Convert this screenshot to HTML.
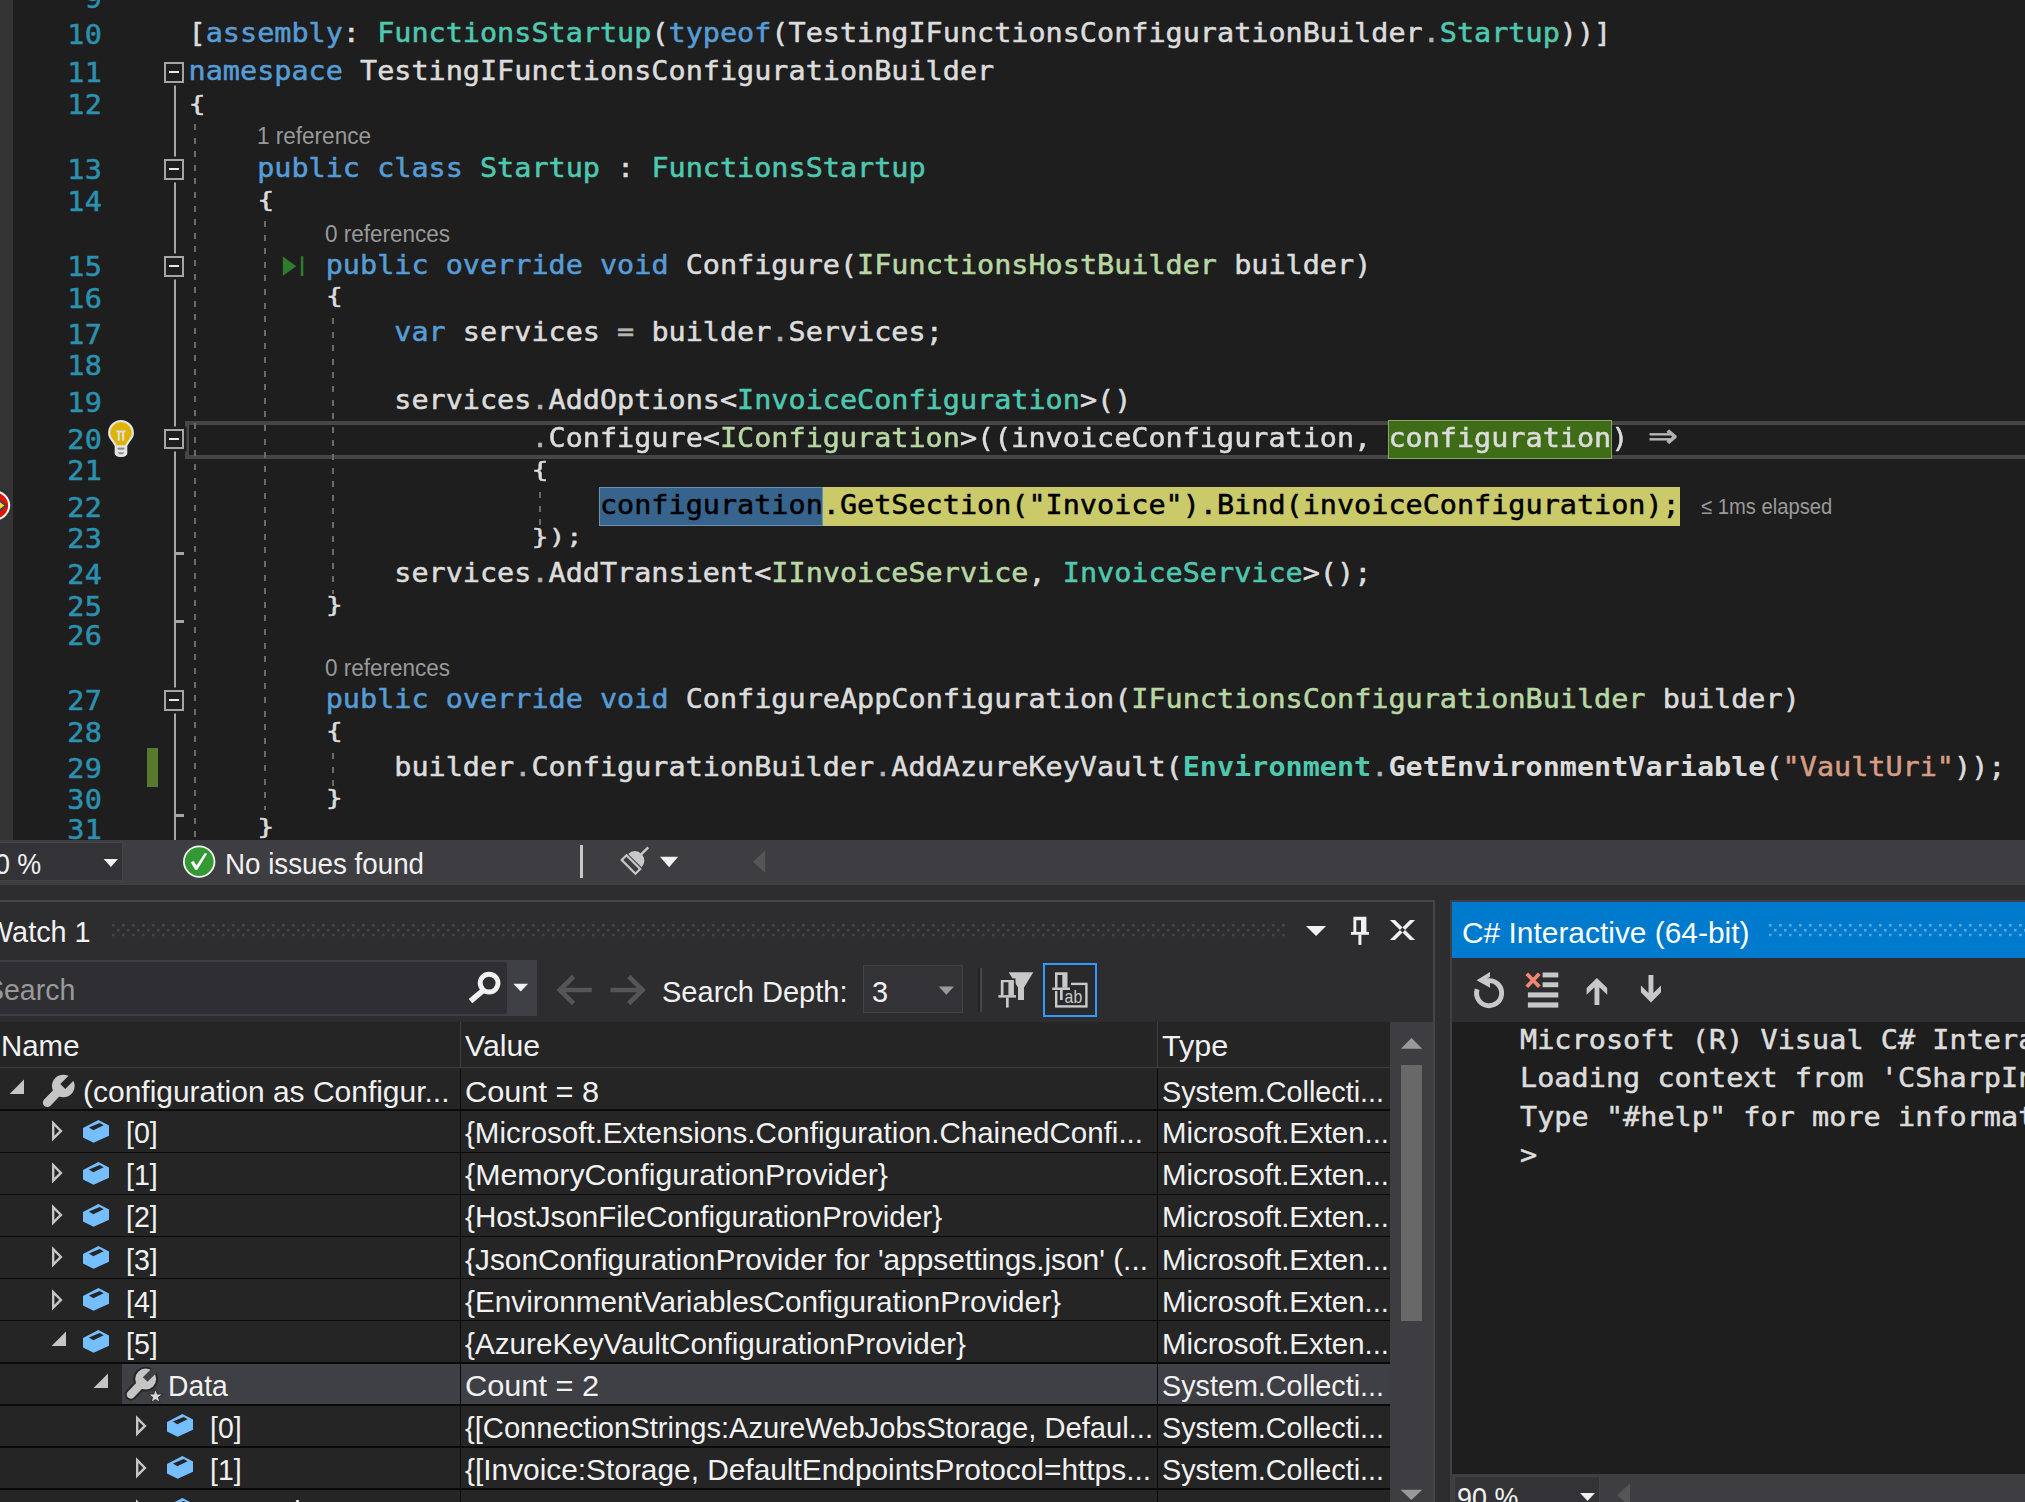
<!DOCTYPE html><html><head><meta charset="utf-8"><title>Visual Studio</title><style>
*{box-sizing:border-box}
html,body{margin:0;padding:0}
body{width:2025px;height:1502px;overflow:hidden;background:#1e1e1e;position:relative;font-family:"Liberation Sans",sans-serif;color:#f1f1f1}
div,span,svg{position:absolute}
.c span,.u span{position:static}
.c{left:188.6px;height:40px;line-height:40px;white-space:pre;font-family:"DejaVu Sans Mono","Liberation Mono",monospace;font-size:28.47px;color:#dcdcdc;transform:scaleY(.93);transform-origin:0 28.86px;-webkit-text-stroke:.55px}
.n{left:38.2px;width:64px;text-align:right;height:40px;line-height:40px;white-space:pre;font-family:"DejaVu Sans Mono","Liberation Mono",monospace;font-size:28.47px;color:#2b91af;transform:scaleY(.93);transform-origin:0 28.86px;-webkit-text-stroke:.55px;letter-spacing:.3px}
.k{color:#569cd6}.t{color:#4ec9b0}.i{color:#b8d7a3}.s{color:#d69d85}.o{color:#b4b4b4}.b{font-weight:bold;-webkit-text-stroke:0}.c .ar{display:inline-block;width:34.28px;text-align:center;transform:scale(1.7,1.55);transform-origin:50% 60%;color:#b4b4b4;position:relative;top:-2px}.d{color:#000}
.br{display:inline-block;position:static}
.u{white-space:pre;line-height:40px;height:40px;transform-origin:0 50%}
.cl{color:#999;font-size:20px}
.ob{width:20.4px;height:20.6px;left:164px;border:2px solid #a5a5a5;background:#1e1e1e;box-shadow:0 0 0 2.5px #1e1e1e}
.ob:after{content:"";position:absolute;left:3px;top:7px;width:10px;height:2px;background:#e8e8e8}
.g{width:2px;background:repeating-linear-gradient(to bottom,#6a6a6a 0,#6a6a6a 6px,transparent 6px,transparent 13.6px)}
.row{left:0;width:1390px;height:2px;background:#0c0c0c}
</style></head><body>
<div style="left:0;top:0;width:13px;height:840px;background:#333333"></div>
<div style="left:185px;top:420.5px;width:1850px;height:38px;border:4.5px solid #464646"></div>
<div style="left:1387.9px;top:420px;width:223.8px;height:38.5px;background:#3f6d17;border:1.5px solid #86a869"></div>
<div style="left:599.0px;top:487px;width:1080.8px;height:38.5px;background:#caca6b"></div>
<div style="left:599.0px;top:487px;width:223.8px;height:38.5px;background:#37648c;border:1.5px solid #6a90b3"></div>
<div class="g" style="left:193.8px;top:124.0px;height:716.0px"></div>
<div class="g" style="left:264.0px;top:221.0px;height:589.0px"></div>
<div class="g" style="left:331.6px;top:318.0px;height:276.0px"></div>
<div class="g" style="left:331.6px;top:753.0px;height:35.0px"></div>
<div class="g" style="left:538.8px;top:492.0px;height:35.0px"></div>
<div style="left:173.6px;top:83px;width:2.4px;height:757px;background:#a5a5a5"></div>
<div style="left:175px;top:552.4px;width:9px;height:2.4px;background:#a5a5a5"></div>
<div style="left:175px;top:620.4px;width:9px;height:2.4px;background:#a5a5a5"></div>
<div style="left:175px;top:814.2px;width:9px;height:2.4px;background:#a5a5a5"></div>
<div class="ob" style="top:62.3px"></div>
<div class="ob" style="top:159.3px"></div>
<div class="ob" style="top:256.3px"></div>
<div class="ob" style="top:428.8px"></div>
<div class="ob" style="top:690.0px"></div>
<div class="n" style="top:-20.86px">9</div>
<div class="n" style="top:14.64px">10</div>
<div class="n" style="top:53.44px">11</div>
<div class="n" style="top:85.34px">12</div>
<div class="n" style="top:149.84px">13</div>
<div class="n" style="top:181.84px">14</div>
<div class="n" style="top:247.14px">15</div>
<div class="n" style="top:278.74px">16</div>
<div class="n" style="top:315.04px">17</div>
<div class="n" style="top:346.04px">18</div>
<div class="n" style="top:382.54px">19</div>
<div class="n" style="top:419.84px">20</div>
<div class="n" style="top:451.44px">21</div>
<div class="n" style="top:487.74px">22</div>
<div class="n" style="top:519.14px">23</div>
<div class="n" style="top:555.14px">24</div>
<div class="n" style="top:586.64px">25</div>
<div class="n" style="top:616.04px">26</div>
<div class="n" style="top:680.94px">27</div>
<div class="n" style="top:712.84px">28</div>
<div class="n" style="top:748.84px">29</div>
<div class="n" style="top:779.74px">30</div>
<div class="n" style="top:809.74px">31</div>
<div class="c" style="top:13.34px">[<span class="k">assembly</span>: <span class="t">FunctionsStartup</span>(<span class="k">typeof</span>(TestingIFunctionsConfigurationBuilder<span class="o">.</span><span class="t">Startup</span>))]</div>
<div class="c" style="top:51.14px"><span class="k">namespace</span> TestingIFunctionsConfigurationBuilder</div>
<div class="c" style="top:81.61px;transform:scaleY(0.761)">{</div>
<div class="c" style="top:147.94px">    <span class="k">public</span> <span class="k">class</span> <span class="t">Startup</span> : <span class="t">FunctionsStartup</span></div>
<div class="c" style="top:178.48px;transform:scaleY(0.723)">    {</div>
<div class="c" style="top:245.14px">        <span class="k">public</span> <span class="k">override</span> <span class="k">void</span> Configure(<span class="i">IFunctionsHostBuilder</span> builder)</div>
<div class="c" style="top:274.21px;transform:scaleY(0.761)">        {</div>
<div class="c" style="top:312.14px">            <span class="k">var</span> services <span class="o">=</span> builder<span class="o">.</span>Services;</div>
<div class="c" style="top:379.94px">            services<span class="o">.</span>AddOptions&lt;<span class="t">InvoiceConfiguration</span>&gt;()</div>
<div class="c" style="top:417.64px">                    <span class="o">.</span>Configure&lt;<span class="i">IConfiguration</span>&gt;((invoiceConfiguration, configuration) <span class="ar">⇒</span></div>
<div class="c" style="top:448.24px;transform:scaleY(0.753)">                    {</div>
<div class="c" style="top:484.84px">                        <span class="d">configuration.GetSection("Invoice").Bind(invoiceConfiguration);</span></div>
<div class="c" style="top:514.53px;transform:scaleY(0.734)">                    });</div>
<div class="c" style="top:553.14px">            services<span class="o">.</span>AddTransient&lt;<span class="i">IInvoiceService</span>, <span class="t">InvoiceService</span>&gt;();</div>
<div class="c" style="top:582.66px;transform:scaleY(0.750)">        }</div>
<div class="c" style="top:678.94px">        <span class="k">public</span> <span class="k">override</span> <span class="k">void</span> ConfigureAppConfiguration(<span class="i">IFunctionsConfigurationBuilder</span> builder)</div>
<div class="c" style="top:709.31px;transform:scaleY(0.761)">        {</div>
<div class="c" style="top:746.84px">            builder<span class="o">.</span>ConfigurationBuilder<span class="o">.</span>AddAzureKeyVault(<span class="t b">Environment</span><span class="o">.</span><span class="b">GetEnvironmentVariable</span>(<span class="s">"VaultUri"</span>));</div>
<div class="c" style="top:776.21px;transform:scaleY(0.761)">        }</div>
<div class="c" style="top:805.21px;transform:scaleY(0.761)">    }</div>
<div class="u " id="t1" style="left:257.3px;top:116.1px;font-size:23px;transform:scaleX(0.9797);color:#999;">1 reference</div>
<div class="u " id="t2" style="left:324.8px;top:213.5px;font-size:23px;transform:scaleX(0.9784);color:#999;">0 references</div>
<div class="u " id="t3" style="left:324.8px;top:647.7px;font-size:23px;transform:scaleX(0.9784);color:#999;">0 references</div>
<div class="u " id="t4" style="left:1701.0px;top:487.3px;font-size:22px;transform:scaleX(0.9179);color:#999;">≤ 1ms elapsed</div>
<div style="left:147.3px;top:748.3px;width:11.2px;height:38.4px;background:#577a2f"></div>
<svg style="left:280px;top:254px" width="26" height="24" viewBox="280 254 26 24"><path d="M282.8 256.6L296.3 266.2L282.8 275.8Z" fill="#2e7d2e"/><rect x="300.8" y="256.2" width="2.5" height="19.8" fill="#2e7d2e"/></svg>
<svg style="left:107.5px;top:419.9px" width="26" height="37" viewBox="0 0 25.4 36.3">
<path d="M12.7 0A12.7 12.7 0 0 1 25.4 12.7C25.4 18 21 21 18.9 25.5V32.5C18.9 34.5 16.5 36.3 12.7 36.3C8.9 36.3 6.5 34.5 6.5 32.5V25.5C4.4 21 0 18 0 12.7A12.7 12.7 0 0 1 12.7 0Z" fill="#e4e4e4"/>
<path d="M12.7 2.2A10.5 10.5 0 0 1 23.2 12.7C23.2 17.2 18.6 20.5 16.9 24.8H8.5C6.8 20.5 2.2 17.2 2.2 12.7A10.5 10.5 0 0 1 12.7 2.2Z" fill="#dfb300"/>
<path d="M7.4 10.4H18L16.6 12.2H8.8Z" fill="#dcdcea"/><path d="M10.5 11.5V20.4M14.8 11.5V20.4" fill="none" stroke="#dcdcea" stroke-width="2"/>
<rect x="9.4" y="27.1" width="6.6" height="2" fill="#8c8c8c"/><path d="M9.6 31.6H15.8L14.4 33.6H11Z" fill="#8c8c8c"/></svg>
<svg style="left:0;top:488px" width="14" height="35" viewBox="0 488 14 35">
<circle cx="-4.75" cy="505.5" r="14.9" fill="#fff"/><circle cx="-4.75" cy="505.5" r="12.9" fill="#e51400"/>
<path d="M-6 494L7.3 505.5L-6 517Z" fill="#454545"/><path d="M-6 498L4.4 505.5L-6 513Z" fill="#ffd829"/></svg>
<div style="left:0;top:840px;width:2025px;height:45px;background:#3e3e42"></div>
<div style="left:0;top:885px;width:2025px;height:617px;background:#2d2d30"></div>
<div style="left:-2px;top:842px;width:125px;height:39px;background:#333337;border:1.5px solid #434346"></div>
<div class="u " id="t5" style="left:-19.6px;top:843.6px;font-size:30px;transform:scaleX(0.8960);">90 %</div>
<svg style="left:103px;top:858px" width="16" height="10"><path d="M0.7 1H15L7.85 9Z" fill="#f1f1f1"/></svg>
<svg style="left:183px;top:845px" width="33" height="34" viewBox="183 845 33 34"><circle cx="199.2" cy="861.6" r="16.2" fill="#f5f5f5"/><circle cx="199.2" cy="861.6" r="14.4" fill="#339933"/>
<path d="M190.7 862.3L193.6 861L196.6 865.5L204.6 853.2L207.2 853.4L197.2 869.9H195.4Z" fill="#fff"/></svg>
<div class="u " id="t6" style="left:225.3px;top:843.6px;font-size:30px;transform:scaleX(0.9250);">No issues found</div>
<div style="left:579.8px;top:845px;width:2.8px;height:32.5px;background:#c8c8c8"></div>
<svg style="left:618px;top:844px" width="34" height="34" viewBox="618 844 34 34"><g transform="translate(638 857.5) rotate(45)" fill="#c8c8c8">
<rect x="-1.2" y="-14.45" width="2.4" height="10"/><path d="M-9.5 4.4A9.5 9.5 0 0 1 9.5 4.4Z"/>
<rect x="-9.7" y="6.55" width="19.4" height="6.8" fill="none" stroke="#c8c8c8" stroke-width="2.2"/></g></svg>
<svg style="left:660px;top:856px" width="19" height="12"><path d="M0 0.7H18.2L9.1 11.2Z" fill="#f1f1f1"/></svg>
<svg style="left:752px;top:850px" width="14" height="24"><path d="M13.2 0.4V23.1L1 11.7Z" fill="#555558"/></svg>
<div style="left:-2px;top:900px;width:1437px;height:610px;border:2px solid #46464a;background:#2d2d30"></div>
<svg style="left:111.9px;top:924.2px" width="1174" height="13"><defs><pattern id="gp1" width="10" height="9.8" patternUnits="userSpaceOnUse"><rect width="2.6" height="2.6" fill="#46464a"/><rect x="5" y="4.9" width="2.6" height="2.6" fill="#46464a"/></pattern></defs><rect width="100%" height="12.5" fill="url(#gp1)"/></svg>
<div class="u " id="t7" style="left:-14.5px;top:911.9px;font-size:30px;transform:scaleX(0.9600);">Watch 1</div>
<svg style="left:1306px;top:925px" width="21" height="12"><path d="M0 1H20.1L10.05 11.1Z" fill="#f1f1f1"/></svg>
<svg style="left:1350px;top:916px" width="20" height="30" viewBox="1350 916 20 30" fill="#f1f1f1"><path d="M1353.4 916.8H1366.4V932H1353.4ZM1356.3 920.2V932H1361V920.2Z" fill-rule="evenodd"/><rect x="1350.9" y="931.9" width="18" height="2.9"/><rect x="1358.4" y="934.8" width="3" height="10.1"/></svg>
<svg style="left:1388px;top:918px" width="29" height="24" viewBox="1388 918 29 24"><path d="M1389.9 920H1395L1415.1 940.1H1410ZM1415.1 920H1410L1389.9 940.1H1395Z" fill="#f1f1f1"/></svg>
<div style="left:-2px;top:959.7px;width:539px;height:56px;border:2px solid #3f3f46;background:#2f2f33"></div>
<div style="left:506.9px;top:959.7px;width:30.1px;height:56px;background:#3f3f46"></div>
<div class="u " id="t8" style="left:-15.3px;top:970.0px;font-size:30px;transform:scaleX(0.9500);color:#999;">Search</div>
<svg style="left:466px;top:970px" width="36" height="36" viewBox="466 970 36 36"><circle cx="489.1" cy="983.1" r="8.9" fill="none" stroke="#f1f1f1" stroke-width="4.9"/><path d="M483.2 990.3L470.5 1001.2" stroke="#f1f1f1" stroke-width="5.6"/></svg>
<svg style="left:513px;top:983px" width="16" height="10"><path d="M0.3 0.8H15.1L7.7 8.5Z" fill="#f1f1f1"/></svg>
<svg style="left:555px;top:973px" width="40" height="34" viewBox="555 973 40 34"><path d="M573.5 976.5L559.8 990L573.5 1003.5M559.8 990H591.8" stroke="#555558" stroke-width="4.6" fill="none"/></svg>
<svg style="left:608px;top:973px" width="40" height="34" viewBox="608 973 40 34"><path d="M628.8 976.5L642.5 990L628.8 1003.5M642.5 990H610.5" stroke="#555558" stroke-width="4.6" fill="none"/></svg>
<div class="u " id="t9" style="left:662.3px;top:971.7px;font-size:30px;transform:scaleX(0.9672);">Search Depth:</div>
<div style="left:863px;top:965.2px;width:100px;height:48px;background:#333337;border:1.5px solid #434346"></div>
<div class="u " id="t10" style="left:872.1px;top:971.7px;font-size:30px;transform:scaleX(0.9648);">3</div>
<svg style="left:938px;top:986px" width="17" height="10"><path d="M0.7 0.5H16L8.35 8.8Z" fill="#999"/></svg>
<div style="left:978.3px;top:967.8px;width:2px;height:44.2px;background:#222224"></div><div style="left:980.3px;top:967.8px;width:1.8px;height:44.2px;background:#46464a"></div>
<svg style="left:997px;top:971px" width="38" height="38" viewBox="997 971 38 38" fill="#c8c8c8"><path d="M1008.7 972.3H1033.3L1024 987.5V1000H1018V987.5Z"/>
<rect x="999.3" y="978.4" width="16.2" height="17" fill="#2d2d30"/>
<path d="M1000.8 979.9H1013.9V995.3H1000.8ZM1003.5 982.3V995.3H1008.4V982.3Z" fill-rule="evenodd"/><rect x="998.4" y="995.1" width="17.6" height="2.5"/><rect x="1006" y="997.5" width="2.7" height="10.1"/></svg>
<div style="left:1043px;top:963px;width:54.1px;height:54.1px;border:2.2px solid #3399ff;background:#29292c"></div>
<svg style="left:1050px;top:970px" width="40" height="40" viewBox="1050 970 40 40" fill="#c8c8c8"><rect x="1056.2" y="983.9" width="30.2" height="22.5" fill="none" stroke="#c8c8c8" stroke-width="2.4"/>
<rect x="1051.3" y="971" width="19.7" height="20" fill="#29292c"/>
<path d="M1055 972.3H1067.5V987.7H1055ZM1057.5 975V987.7H1062.3V975Z" fill-rule="evenodd"/><rect x="1052.3" y="987.5" width="17.7" height="2.5"/><rect x="1060" y="990" width="2.7" height="10"/>
<text x="1064.6" y="1002.7" font-family="Liberation Sans,sans-serif" font-size="19" textLength="17.6" lengthAdjust="spacingAndGlyphs">ab</text></svg>
<div style="left:0;top:1022.4px;width:1390px;height:480px;background:#252526"></div>
<div style="left:1390px;top:1022.4px;width:43px;height:480px;background:#3e3e42"></div>
<svg style="left:1400px;top:1037px" width="23" height="12"><path d="M0.8 11.7H22.2L11.5 1Z" fill="#999"/></svg>
<svg style="left:1400px;top:1489px" width="23" height="12"><path d="M0.5 0.8H22.3L11.4 10.9Z" fill="#999"/></svg>
<div style="left:1401px;top:1064.7px;width:21px;height:256.3px;background:#686868"></div>
<div style="left:122px;top:1362.2px;width:1268px;height:42.1px;background:#3f3f46"></div>
<div style="left:0;top:1066.6px;width:1390px;height:1.6px;background:#3a3a3e"></div>
<div style="left:459.6px;top:1022.4px;width:1.8px;height:45px;background:#3f3f46"></div>
<div style="left:459.6px;top:1068.5px;width:1.8px;height:440px;background:#0a0a0a"></div>
<div style="left:1156.6px;top:1022.4px;width:1.8px;height:45px;background:#3f3f46"></div>
<div style="left:1156.6px;top:1068.5px;width:1.8px;height:440px;background:#0a0a0a"></div>
<div style="left:0;top:1109.4px;width:1390px;height:1.7px;background:#0a0a0a"></div>
<div style="left:0;top:1151.5px;width:1390px;height:1.7px;background:#0a0a0a"></div>
<div style="left:0;top:1193.5px;width:1390px;height:1.7px;background:#0a0a0a"></div>
<div style="left:0;top:1235.6px;width:1390px;height:1.7px;background:#0a0a0a"></div>
<div style="left:0;top:1277.7px;width:1390px;height:1.7px;background:#0a0a0a"></div>
<div style="left:0;top:1319.8px;width:1390px;height:1.7px;background:#0a0a0a"></div>
<div style="left:0;top:1361.9px;width:1390px;height:1.7px;background:#0a0a0a"></div>
<div style="left:0;top:1403.9px;width:1390px;height:1.7px;background:#0a0a0a"></div>
<div style="left:0;top:1446.0px;width:1390px;height:1.7px;background:#0a0a0a"></div>
<div style="left:0;top:1488.1px;width:1390px;height:1.7px;background:#0a0a0a"></div>
<div class="u " id="t11" style="left:1.3px;top:1025.6px;font-size:30px;transform:scaleX(0.9809);">Name</div>
<div class="u " id="t12" style="left:465.2px;top:1025.6px;font-size:30px;transform:scaleX(1.0078);">Value</div>
<div class="u " id="t13" style="left:1162.3px;top:1025.6px;font-size:30px;transform:scaleX(1.0177);">Type</div>
<svg style="left:9.0px;top:1079.1px" width="16" height="16"><path d="M0.6 15H15V0.6Z" fill="#c5c5c5"/></svg>
<svg style="left:39.5px;top:1073.2px;overflow:visible" width="37" height="36" viewBox="-2 -2 37 36"><path d="M5.3 27.6L16.5 16" stroke="#c5c5c5" stroke-width="8.9" stroke-linecap="round"/><circle cx="21.3" cy="11" r="11.3" fill="#c5c5c5"/><path d="M20.8 11.5L32 0.3" stroke="#252526" stroke-width="7"/></svg>
<div class="u " id="t14" style="left:82.8px;top:1071.9px;font-size:30px;transform:scaleX(0.9990);">(configuration as Configur...</div>
<div class="u " id="t15" style="left:464.8px;top:1071.9px;font-size:30px;transform:scaleX(1.0234);">Count = 8</div>
<div class="u " id="t16" style="left:1161.8px;top:1071.9px;font-size:30px;transform:scaleX(0.9580);">System.Collecti...</div>
<svg style="left:51.6px;top:1120.2px" width="12" height="22"><path d="M1.2 3.2L8.9 10.9L1.2 18.6Z" fill="none" stroke="#c5c5c5" stroke-width="2.4"/></svg>
<svg style="left:83.0px;top:1119.6px" width="27" height="24"><path d="M15.4 0L26 5.6V15.7L10.6 22.8L0 17.4V8Z" fill="#75beff"/><path d="M5.9 7.4L16.6 2.9L20.7 5.3L10.3 10.3Z" fill="#252526"/></svg>
<div class="u " id="t17" style="left:126.3px;top:1113.3px;font-size:30px;transform:scaleX(0.9533);">[0]</div>
<div class="u " id="t18" style="left:464.8px;top:1113.3px;font-size:30px;transform:scaleX(0.9845);">{Microsoft.Extensions.Configuration.ChainedConfi...</div>
<div class="u " id="t19" style="left:1161.8px;top:1113.3px;font-size:30px;transform:scaleX(0.9795);">Microsoft.Exten...</div>
<svg style="left:51.6px;top:1162.3px" width="12" height="22"><path d="M1.2 3.2L8.9 10.9L1.2 18.6Z" fill="none" stroke="#c5c5c5" stroke-width="2.4"/></svg>
<svg style="left:83.0px;top:1161.7px" width="27" height="24"><path d="M15.4 0L26 5.6V15.7L10.6 22.8L0 17.4V8Z" fill="#75beff"/><path d="M5.9 7.4L16.6 2.9L20.7 5.3L10.3 10.3Z" fill="#252526"/></svg>
<div class="u " id="t20" style="left:126.3px;top:1155.4px;font-size:30px;transform:scaleX(0.9533);">[1]</div>
<div class="u " id="t21" style="left:464.8px;top:1155.4px;font-size:30px;transform:scaleX(1.0106);">{MemoryConfigurationProvider}</div>
<div class="u " id="t22" style="left:1161.8px;top:1155.4px;font-size:30px;transform:scaleX(0.9795);">Microsoft.Exten...</div>
<svg style="left:51.6px;top:1204.3px" width="12" height="22"><path d="M1.2 3.2L8.9 10.9L1.2 18.6Z" fill="none" stroke="#c5c5c5" stroke-width="2.4"/></svg>
<svg style="left:83.0px;top:1203.7px" width="27" height="24"><path d="M15.4 0L26 5.6V15.7L10.6 22.8L0 17.4V8Z" fill="#75beff"/><path d="M5.9 7.4L16.6 2.9L20.7 5.3L10.3 10.3Z" fill="#252526"/></svg>
<div class="u " id="t23" style="left:126.3px;top:1197.4px;font-size:30px;transform:scaleX(0.9533);">[2]</div>
<div class="u " id="t24" style="left:464.8px;top:1197.4px;font-size:30px;transform:scaleX(0.9864);">{HostJsonFileConfigurationProvider}</div>
<div class="u " id="t25" style="left:1161.8px;top:1197.4px;font-size:30px;transform:scaleX(0.9795);">Microsoft.Exten...</div>
<svg style="left:51.6px;top:1246.4px" width="12" height="22"><path d="M1.2 3.2L8.9 10.9L1.2 18.6Z" fill="none" stroke="#c5c5c5" stroke-width="2.4"/></svg>
<svg style="left:83.0px;top:1245.8px" width="27" height="24"><path d="M15.4 0L26 5.6V15.7L10.6 22.8L0 17.4V8Z" fill="#75beff"/><path d="M5.9 7.4L16.6 2.9L20.7 5.3L10.3 10.3Z" fill="#252526"/></svg>
<div class="u " id="t26" style="left:126.3px;top:1239.5px;font-size:30px;transform:scaleX(0.9533);">[3]</div>
<div class="u " id="t27" style="left:464.8px;top:1239.5px;font-size:30px;transform:scaleX(0.9944);">{JsonConfigurationProvider for 'appsettings.json' (...</div>
<div class="u " id="t28" style="left:1161.8px;top:1239.5px;font-size:30px;transform:scaleX(0.9795);">Microsoft.Exten...</div>
<svg style="left:51.6px;top:1288.5px" width="12" height="22"><path d="M1.2 3.2L8.9 10.9L1.2 18.6Z" fill="none" stroke="#c5c5c5" stroke-width="2.4"/></svg>
<svg style="left:83.0px;top:1287.9px" width="27" height="24"><path d="M15.4 0L26 5.6V15.7L10.6 22.8L0 17.4V8Z" fill="#75beff"/><path d="M5.9 7.4L16.6 2.9L20.7 5.3L10.3 10.3Z" fill="#252526"/></svg>
<div class="u " id="t29" style="left:126.3px;top:1281.6px;font-size:30px;transform:scaleX(0.9533);">[4]</div>
<div class="u " id="t30" style="left:464.8px;top:1281.6px;font-size:30px;transform:scaleX(0.9909);">{EnvironmentVariablesConfigurationProvider}</div>
<div class="u " id="t31" style="left:1161.8px;top:1281.6px;font-size:30px;transform:scaleX(0.9795);">Microsoft.Exten...</div>
<svg style="left:51.3px;top:1331.4px" width="16" height="16"><path d="M0.6 15H15V0.6Z" fill="#c5c5c5"/></svg>
<svg style="left:83.0px;top:1330.0px" width="27" height="24"><path d="M15.4 0L26 5.6V15.7L10.6 22.8L0 17.4V8Z" fill="#75beff"/><path d="M5.9 7.4L16.6 2.9L20.7 5.3L10.3 10.3Z" fill="#252526"/></svg>
<div class="u " id="t32" style="left:126.3px;top:1323.7px;font-size:30px;transform:scaleX(0.9533);">[5]</div>
<div class="u " id="t33" style="left:464.8px;top:1323.7px;font-size:30px;transform:scaleX(0.9893);">{AzureKeyVaultConfigurationProvider}</div>
<div class="u " id="t34" style="left:1161.8px;top:1323.7px;font-size:30px;transform:scaleX(0.9795);">Microsoft.Exten...</div>
<svg style="left:93.0px;top:1373.1px" width="16" height="16"><path d="M0.6 15H15V0.6Z" fill="#c5c5c5"/></svg>
<svg style="left:124.1px;top:1367.1px;overflow:visible" width="34.41" height="33.48" viewBox="-2 -2 37 36"><path d="M5.3 27.6L16.5 16" stroke="#252526" stroke-width="12.9" stroke-linecap="round"/><circle cx="21.3" cy="11" r="13.3" fill="#252526"/><path d="M5.3 27.6L16.5 16" stroke="#c5c5c5" stroke-width="8.9" stroke-linecap="round"/><circle cx="21.3" cy="11" r="11.3" fill="#c5c5c5"/><path d="M20.8 11.5L32 0.3" stroke="#3f3f46" stroke-width="7"/></svg>
<svg style="left:146.6px;top:1387.8px" width="17" height="17" viewBox="-8.5 -8.5 17 17"><path d="M0 -6.3L1.5 -2H6L2.4 0.7L3.7 5L0 2.4L-3.7 5L-2.4 0.7L-6 -2H-1.5Z" fill="#d8d8d8" stroke="#2a2a2c" stroke-width="1.6" paint-order="stroke"/></svg>
<div class="u " id="t35" style="left:167.7px;top:1365.8px;font-size:30px;transform:scaleX(0.9436);">Data</div>
<div class="u " id="t36" style="left:464.8px;top:1365.8px;font-size:30px;transform:scaleX(1.0234);">Count = 2</div>
<div class="u " id="t37" style="left:1161.8px;top:1365.8px;font-size:30px;transform:scaleX(0.9580);">System.Collecti...</div>
<svg style="left:135.7px;top:1414.7px" width="12" height="22"><path d="M1.2 3.2L8.9 10.9L1.2 18.6Z" fill="none" stroke="#c5c5c5" stroke-width="2.4"/></svg>
<svg style="left:167.0px;top:1414.1px" width="27" height="24"><path d="M15.4 0L26 5.6V15.7L10.6 22.8L0 17.4V8Z" fill="#75beff"/><path d="M5.9 7.4L16.6 2.9L20.7 5.3L10.3 10.3Z" fill="#252526"/></svg>
<div class="u " id="t38" style="left:210.2px;top:1407.8px;font-size:30px;transform:scaleX(0.9473);">[0]</div>
<div class="u " id="t39" style="left:464.8px;top:1407.8px;font-size:30px;transform:scaleX(0.9715);">{[ConnectionStrings:AzureWebJobsStorage, Defaul...</div>
<div class="u " id="t40" style="left:1161.8px;top:1407.8px;font-size:30px;transform:scaleX(0.9580);">System.Collecti...</div>
<svg style="left:135.7px;top:1456.8px" width="12" height="22"><path d="M1.2 3.2L8.9 10.9L1.2 18.6Z" fill="none" stroke="#c5c5c5" stroke-width="2.4"/></svg>
<svg style="left:167.0px;top:1456.2px" width="27" height="24"><path d="M15.4 0L26 5.6V15.7L10.6 22.8L0 17.4V8Z" fill="#75beff"/><path d="M5.9 7.4L16.6 2.9L20.7 5.3L10.3 10.3Z" fill="#252526"/></svg>
<div class="u " id="t41" style="left:210.2px;top:1449.9px;font-size:30px;transform:scaleX(0.9473);">[1]</div>
<div class="u " id="t42" style="left:464.8px;top:1449.9px;font-size:30px;transform:scaleX(0.9948);">{[Invoice:Storage, DefaultEndpointsProtocol=https...</div>
<div class="u " id="t43" style="left:1161.8px;top:1449.9px;font-size:30px;transform:scaleX(0.9580);">System.Collecti...</div>
<svg style="left:135.7px;top:1498.9px" width="12" height="22"><path d="M1.2 3.2L8.9 10.9L1.2 18.6Z" fill="none" stroke="#c5c5c5" stroke-width="2.4"/></svg>
<svg style="left:167.0px;top:1498.3px" width="27" height="24"><path d="M15.4 0L26 5.6V15.7L10.6 22.8L0 17.4V8Z" fill="#75beff"/><path d="M5.9 7.4L16.6 2.9L20.7 5.3L10.3 10.3Z" fill="#252526"/></svg>
<div class="u " id="t44" style="left:210.2px;top:1492.0px;font-size:30px;transform:scaleX(0.9600);">Raw View</div>
<div style="left:1450px;top:900px;width:600px;height:610px;border:2px solid #3f3f46;background:#2d2d30"></div>
<div style="left:1452px;top:902px;width:580px;height:56px;background:#007acc"></div>
<svg style="left:1769px;top:924.2px" width="300" height="13"><defs><pattern id="gp2" width="10" height="9.8" patternUnits="userSpaceOnUse"><rect width="2.6" height="2.6" fill="#59a8de"/><rect x="5" y="4.9" width="2.6" height="2.6" fill="#59a8de"/></pattern></defs><rect width="100%" height="12.5" fill="url(#gp2)"/></svg>
<div class="u " id="t45" style="left:1461.8px;top:913.1px;font-size:30px;transform:scaleX(0.9967);color:#fff;">C# Interactive (64-bit)</div>
<div style="left:1452px;top:1021.5px;width:580px;height:452px;background:#1e1e1e"></div>
<div style="left:1452px;top:1473.5px;width:580px;height:30px;background:#3e3e42"></div>
<div style="left:1454px;top:1475.8px;width:146px;height:30px;background:#333337;border:1.5px solid #434346"></div>
<div class="u " id="t46" style="left:1457.0px;top:1478.4px;font-size:30px;transform:scaleX(0.8963);">90 %</div>
<svg style="left:1580px;top:1492px" width="16" height="10"><path d="M0 1H15L7.5 9Z" fill="#f1f1f1"/></svg>
<svg style="left:1616px;top:1483px" width="15" height="20"><path d="M14 0.5V24L1 12Z" fill="#555558"/></svg>
<svg style="left:1472px;top:970px" width="36" height="40" viewBox="1472 970 36 40"><path d="M1489.1 980.6A12.55 12.55 0 1 1 1477.2 989.2" fill="none" stroke="#c8c8c8" stroke-width="4.9"/><path d="M1490 972L1476.6 980.3L1490 987.7V983.2L1484.5 980.3L1490 976.8Z" fill="#c8c8c8"/><path d="M1482 978.2H1490V983.2H1483Z" fill="#c8c8c8"/></svg>
<svg style="left:1524px;top:970px" width="36" height="40" viewBox="1524 970 36 40"><path d="M1526.8 973.8L1539.3 986.7M1539.3 973.8L1526.8 986.7" stroke="#f48771" stroke-width="3.8"/>
<g fill="#c8c8c8"><rect x="1542.6" y="972.5" width="15.7" height="4.9"/><rect x="1542.6" y="982.3" width="15.7" height="4.9"/><rect x="1527.9" y="992.4" width="30.4" height="5.1"/><rect x="1527.9" y="1002.4" width="30.4" height="5.2"/></g></svg>
<svg style="left:1584px;top:974px" width="26" height="34" viewBox="1584 974 26 34"><path d="M1596.9 977.9L1607.2 988V994.7L1599.4 987.2V1005.1H1594.5V987.2L1586.6 994.7V988Z" fill="#c8c8c8"/></svg>
<svg style="left:1638px;top:972px" width="26" height="34" viewBox="1638 972 26 34"><path d="M1651 1002.4L1661 992.3V985.6L1653.4 993.1V975H1648.5V993.1L1640.9 985.6V992.3Z" fill="#c8c8c8"/></svg>
<div class="c" style="left:1520px;top:1020.14px;letter-spacing:.04px">Microsoft (R) Visual C# Interactive Compiler version</div>
<div class="c" style="left:1520px;top:1058.39px;letter-spacing:.04px">Loading context from 'CSharpInteractive.rsp'.</div>
<div class="c" style="left:1520px;top:1096.64px;letter-spacing:.04px">Type "#help" for more information.</div>
<div class="c" style="left:1520px;top:1134.89px;letter-spacing:.04px">&gt;</div>
</body></html>
